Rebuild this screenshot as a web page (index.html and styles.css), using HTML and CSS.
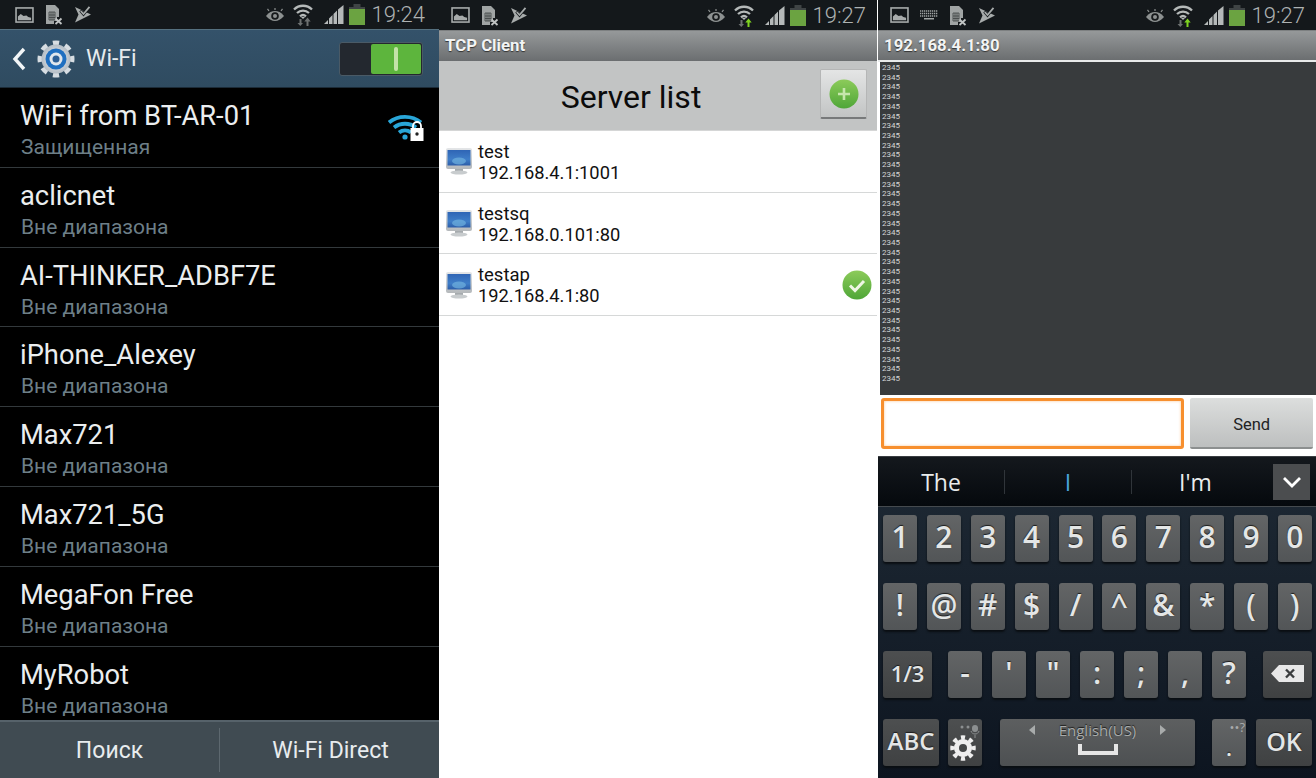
FILE: index.html
```html
<!DOCTYPE html>
<html lang="ru">
<head>
<meta charset="utf-8">
<title>Android screens</title>
<link rel="stylesheet" href="styles.css">
</head>
<body>
<svg class="defs" width="0" height="0" aria-hidden="true">
  <defs>
    <linearGradient id="screenGrad" x1="0" y1="0" x2="0" y2="1"><stop offset="0" stop-color="#2f65b5"/><stop offset=".6" stop-color="#3f7ec8"/><stop offset="1" stop-color="#2c5da8"/></linearGradient>
    <linearGradient id="standGrad" x1="0" y1="0" x2="0" y2="1"><stop offset="0" stop-color="#e4e6e8"/><stop offset="1" stop-color="#b4b8bb"/></linearGradient>
    <linearGradient id="greenGrad" x1="0" y1="0" x2="0" y2="1"><stop offset="0" stop-color="#8ccb5a"/><stop offset="1" stop-color="#4fa638"/></linearGradient>
    <radialGradient id="gearGrad"><stop offset="0" stop-color="#f4f6f8"/><stop offset="1" stop-color="#b4bdc5"/></radialGradient>
    <symbol id="i-pic" viewBox="0 0 20 17"><rect x="1" y="1" width="18" height="15" fill="none" stroke="#a7abab" stroke-width="1.7"/><path d="M3 14V10l3-2.500 3 2 3-.5 2 1.500 3 1V14z" fill="#a7abab"/></symbol>
    <symbol id="i-sim" viewBox="0 0 18 21"><path d="M1 1h9l4 4v8H12v4H9v3H1z" fill="#a0a4a4"/><path d="M4 8h6v8H4zM6 8v8M8 8v8M4 11h6M4 13.500h6" fill="none" stroke="#3d4142" stroke-width=".8"/><path d="M10.500 14.500l6 5.500m0-5.500l-6 5.500" stroke="#c2c5c5" stroke-width="1.800"/></symbol>
    <symbol id="i-flag" viewBox="0 0 17 17"><path d="M0 1l16 7.500L0 16.500l3.500-8z" fill="#a7abab"/><path d="M5.500 4.500l3 3.500 6-7.500" fill="none" stroke="#14181b" stroke-width="3.200"/><path d="M5.800 5l2.700 3L14.500 .8" fill="none" stroke="#a7abab" stroke-width="1.800"/></symbol>
    <symbol id="i-eye" viewBox="0 0 20 13"><path d="M1 8c3-4 6-5 9-5s6 1 9 5c-3 3.600-6 5-9 5s-6-1.400-9-5z" fill="#8d9191"/><circle cx="10" cy="8" r="3.800" fill="#16191b"/><circle cx="10" cy="8" r="2" fill="#8d9191"/><path d="M4 3L2.500 .8M16 3l1.500-2.200M10 2V0" stroke="#8d9191" stroke-width="1.200"/></symbol>
    <symbol id="i-wifi" viewBox="0 0 20 23"><g fill="none" stroke="#b5b9b9" stroke-width="2.300"><path d="M1 6.500C6 1.500 14 1.500 19 6.500"/><path d="M4 10c3.500-3.300 8.500-3.300 12 0"/><path d="M7 13.300c2-1.700 4-1.700 6 0"/></g><path d="M10 16l-2-2h4z" fill="#b5b9b9"/><path d="M6.500 16v4H4.500l2.800 3 2.700-3H8.500v-4z" fill="#6d7171"/><path d="M13.500 23v-4.500h-2.200l3.200-4 3.200 4h-2.200V23z" fill="#6d7171"/></symbol>
    <symbol id="i-wifi-up" viewBox="0 0 20 23"><g fill="none" stroke="#b5b9b9" stroke-width="2.300"><path d="M1 6.500C6 1.500 14 1.500 19 6.500"/><path d="M4 10c3.500-3.300 8.500-3.300 12 0"/><path d="M7 13.300c2-1.700 4-1.700 6 0"/></g><path d="M10 16l-2-2h4z" fill="#b5b9b9"/><path d="M6.500 16v4H4.500l2.800 3 2.700-3H8.500v-4z" fill="#6d7171"/><path d="M13.500 23v-4.500h-2.200l3.200-4 3.200 4h-2.200V23z" fill="#7ed321"/></symbol>
    <symbol id="i-signal" viewBox="0 0 20 19"><path d="M0 19l4-4v4zM5 19v-5.500l3.500-3.500v9zM9.500 19V9l3.500-3.500V19zM14 19V4.500L19.500 0v19z" fill="#b5b9b9"/></symbol>
    <symbol id="i-batt" viewBox="0 0 16 21"><rect x="4.500" y="0" width="7" height="3" fill="#3f4445"/><rect x="0" y="3" width="16" height="2" fill="#3f4445"/><rect x="0" y="5" width="16" height="16" fill="#6ba341"/></symbol>
    <symbol id="i-kbd" viewBox="0 0 18 10"><path d="M0 1h18M0 3.500h18M0 6h18" stroke="#a0a4a4" stroke-width="1.400" stroke-dasharray="1.300 .7"/><rect x="4" y="8" width="10" height="1.500" fill="#a0a4a4"/></symbol>
    <symbol id="i-monitor" viewBox="0 0 26 27"><rect x="0" y="0" width="26" height="21" rx="2" fill="url(#standGrad)"/><rect x="1.500" y="2" width="23" height="15.500" fill="url(#screenGrad)"/><ellipse cx="13" cy="13" rx="7" ry="3.500" fill="#6fb0de" opacity=".7"/><rect x="9" y="21" width="8" height="2" fill="#a6abae"/><ellipse cx="13" cy="24.500" rx="8.500" ry="2" fill="#c8ccce"/></symbol>
  </defs>
</svg>

<main class="screens">
  <section class="phone phone-wifi">
    <header class="status status-wifi">
      <svg class="si si-pic"><use href="#i-pic"/></svg>
      <svg class="si si-sim"><use href="#i-sim"/></svg>
      <svg class="si si-flag"><use href="#i-flag"/></svg>
      <span class="status-spacer"></span>
      <svg class="si si-eye"><use href="#i-eye"/></svg>
      <svg class="si si-wifi"><use href="#i-wifi"/></svg>
      <svg class="si si-signal"><use href="#i-signal"/></svg>
      <svg class="si si-batt"><use href="#i-batt"/></svg>
      <span class="clock">19:24</span>
    </header>
    <div class="wifi-head">
      <svg class="back" viewBox="0 0 14 24"><path d="M12 2L3 12l9 10" fill="none" stroke="#f2f5f7" stroke-width="3.400"/></svg>
      <svg class="gear" viewBox="0 0 38 38">
        <circle cx="19" cy="19" r="15.500" fill="none" stroke="#d7dde2" stroke-width="6" pathLength="80" stroke-dasharray="5 5" stroke-dashoffset="2.500"/>
        <circle cx="19" cy="19" r="14.500" fill="url(#gearGrad)"/>
        <circle cx="19" cy="19" r="10.500" fill="#1f6fc0"/>
        <circle cx="19" cy="19" r="6.500" fill="#dfe6ec"/>
        <circle cx="19" cy="19" r="3.500" fill="#2c5f96"/>
      </svg>
      <span class="wifi-title">Wi-Fi</span>
      <div class="toggle"><span class="toggle-on"><span class="toggle-grip"></span></span></div>
    </div>
    <ul class="net-list">
      <li class="net">
        <div class="net-name">WiFi from BT-AR-01</div>
        <div class="net-sub">Защищенная</div>
        <svg class="net-signal" viewBox="0 0 36 27">
          <g fill="none" stroke="#29a6d8" stroke-width="3.800"><path d="M1 8.500C10 1 24 1 33 8.500"/><path d="M6 13.500c6.500-5 15.500-5 22 0"/><path d="M11 18.500c3.500-2.700 8.500-2.700 12 0"/></g>
          <circle cx="17" cy="23" r="2.600" fill="#29a6d8"/>
          <path d="M25 15v-3a4 4 0 0 1 8 0v3" fill="none" stroke="#fff" stroke-width="1.800"/>
          <rect x="22.500" y="14" width="13" height="13" fill="#fff"/>
          <circle cx="29" cy="20" r="1.700" fill="#222"/>
        </svg>
      </li>
      <li class="net"><div class="net-name">aclicnet</div><div class="net-sub">Вне диапазона</div></li>
      <li class="net"><div class="net-name">AI-THINKER_ADBF7E</div><div class="net-sub">Вне диапазона</div></li>
      <li class="net"><div class="net-name">iPhone_Alexey</div><div class="net-sub">Вне диапазона</div></li>
      <li class="net"><div class="net-name">Max721</div><div class="net-sub">Вне диапазона</div></li>
      <li class="net"><div class="net-name">Max721_5G</div><div class="net-sub">Вне диапазона</div></li>
      <li class="net"><div class="net-name">MegaFon Free</div><div class="net-sub">Вне диапазона</div></li>
      <li class="net"><div class="net-name">MyRobot</div><div class="net-sub">Вне диапазона</div></li>
    </ul>
    <footer class="wifi-foot">
      <button class="foot-btn foot-scan">Поиск</button>
      <span class="foot-div"></span>
      <button class="foot-btn foot-direct">Wi-Fi Direct</button>
    </footer>
  </section>

  <section class="phone phone-list">
    <header class="status status-app">
      <svg class="si si-pic"><use href="#i-pic"/></svg>
      <svg class="si si-sim"><use href="#i-sim"/></svg>
      <svg class="si si-flag"><use href="#i-flag"/></svg>
      <span class="status-spacer"></span>
      <svg class="si si-eye"><use href="#i-eye"/></svg>
      <svg class="si si-wifi"><use href="#i-wifi-up"/></svg>
      <svg class="si si-signal"><use href="#i-signal"/></svg>
      <svg class="si si-batt"><use href="#i-batt"/></svg>
      <span class="clock">19:27</span>
    </header>
    <div class="app-title">TCP Client</div>
    <div class="list-head">
      <h1 class="list-title">Server list</h1>
      <button class="add-btn" aria-label="Add">
        <svg class="add-icon" viewBox="0 0 30 30"><circle cx="15" cy="15" r="14.500" fill="url(#greenGrad)"/><path d="M15 9v12M9 15h12" stroke="#c6e6ac" stroke-width="2.600"/></svg>
      </button>
    </div>
    <ul class="srv-list">
      <li class="srv">
        <svg class="srv-icon"><use href="#i-monitor"/></svg>
        <div><div class="srv-name">test</div><div class="srv-addr">192.168.4.1:1001</div></div>
      </li>
      <li class="srv">
        <svg class="srv-icon"><use href="#i-monitor"/></svg>
        <div><div class="srv-name">testsq</div><div class="srv-addr">192.168.0.101:80</div></div>
      </li>
      <li class="srv">
        <svg class="srv-icon"><use href="#i-monitor"/></svg>
        <div><div class="srv-name">testap</div><div class="srv-addr">192.168.4.1:80</div></div>
        <svg class="srv-check" viewBox="0 0 30 30"><circle cx="15" cy="15" r="14.500" fill="url(#greenGrad)"/><path d="M8 15.500l5 5 9-9.500" fill="none" stroke="#eef6e4" stroke-width="3"/></svg>
      </li>
    </ul>
  </section>

  <section class="phone phone-term">
    <header class="status status-term">
      <svg class="si si-pic"><use href="#i-pic"/></svg>
      <svg class="si si-kbd"><use href="#i-kbd"/></svg>
      <svg class="si si-sim"><use href="#i-sim"/></svg>
      <svg class="si si-flag"><use href="#i-flag"/></svg>
      <span class="status-spacer"></span>
      <svg class="si si-eye"><use href="#i-eye"/></svg>
      <svg class="si si-wifi"><use href="#i-wifi-up"/></svg>
      <svg class="si si-signal"><use href="#i-signal"/></svg>
      <svg class="si si-batt"><use href="#i-batt"/></svg>
      <span class="clock">19:27</span>
    </header>
    <div class="app-title app-title-term">192.168.4.1:80</div>
    <div class="log">
      <div>2345</div><div>2345</div><div>2345</div><div>2345</div><div>2345</div><div>2345</div><div>2345</div><div>2345</div><div>2345</div><div>2345</div><div>2345</div>
      <div>2345</div><div>2345</div><div>2345</div><div>2345</div><div>2345</div><div>2345</div><div>2345</div><div>2345</div><div>2345</div><div>2345</div><div>2345</div>
      <div>2345</div><div>2345</div><div>2345</div><div>2345</div><div>2345</div><div>2345</div><div>2345</div><div>2345</div><div>2345</div><div>2345</div><div>2345</div>
    </div>
    <div class="send-row">
      <div class="send-input"></div>
      <button class="send-btn">Send</button>
    </div>
    <div class="keyboard">
      <div class="suggest">
        <span class="sug">The</span>
        <span class="sug sug-mid">I</span>
        <span class="sug sug-last">I'm</span>
        <span class="sug-more"><svg class="sug-chev" viewBox="0 0 20 12"><path d="M2 2l8 8 8-8" fill="none" stroke="#fff" stroke-width="2.800"/></svg></span>
      </div>
      <div class="keys">
        <div class="krow krow-num">
          <span class="key">1</span><span class="key">2</span><span class="key">3</span><span class="key">4</span><span class="key">5</span><span class="key">6</span><span class="key">7</span><span class="key">8</span><span class="key">9</span><span class="key">0</span>
        </div>
        <div class="krow krow-sym">
          <span class="key">!</span><span class="key">@</span><span class="key">#</span><span class="key">$</span><span class="key">/</span><span class="key">^</span><span class="key">&amp;</span><span class="key">*</span><span class="key">(</span><span class="key">)</span>
        </div>
        <div class="krow krow-punct">
          <span class="key key-fn key-page">1/3</span>
          <span class="key">-</span><span class="key">'</span><span class="key">"</span><span class="key">:</span><span class="key">;</span><span class="key">,</span><span class="key">?</span>
          <span class="key key-fn key-del"><svg class="del-icon" viewBox="0 0 33 17"><path d="M0 8.500L8 0h25v17H8z" fill="#e8e8e8"/><path d="M15 4.500l8 8m0-8l-8 8" stroke="#3a3d3e" stroke-width="2.400"/></svg></span>
        </div>
        <div class="krow krow-bottom">
          <span class="key key-fn key-abc">ABC</span>
          <span class="key key-fn key-set">
            <svg class="set-mic" viewBox="0 0 20 16"><circle cx="2" cy="5" r="1.500" fill="#8c8f90"/><circle cx="8" cy="5" r="1.500" fill="#8c8f90"/><rect x="12" y="3" width="6" height="7" rx="3" fill="#8c8f90"/><path d="M11 9c1 4 7 4 8 0M15 13v3" fill="none" stroke="#8c8f90" stroke-width="1"/></svg>
            <svg class="set-icon" viewBox="0 0 28 28"><circle cx="14" cy="14" r="10.500" fill="none" stroke="#eee" stroke-width="4.500" pathLength="80" stroke-dasharray="5 5" stroke-dashoffset="2.500"/><circle cx="14" cy="14" r="9" fill="#eee"/><circle cx="14" cy="14" r="4" fill="#454748"/></svg>
          </span>
          <span class="key key-space">
            <span class="space-lang"><i class="tri tri-l"></i><span class="lang">English(US)</span><i class="tri tri-r"></i></span>
            <svg class="space-icon" viewBox="0 0 40 12"><path d="M2 0v9h36V0" fill="none" stroke="#e6e6e6" stroke-width="4"/></svg>
          </span>
          <span class="key key-dot">.<span class="hint hint-dot">••?</span></span>
          <span class="key key-fn key-ok">OK</span>
        </div>
      </div>
    </div>
  </section>
</main>
</body>
</html>
```
FILE: styles.css
```css
* { box-sizing: border-box; }
html, body { margin: 0; padding: 0; }
body { width: 1316px; height: 778px; overflow: hidden; background: #fff; font-family: Roboto, "Liberation Sans", sans-serif; }
.defs { position: absolute; }
ul { list-style: none; margin: 0; padding: 0; }
button { font: inherit; border: 0; padding: 0; background: none; color: inherit; }

.screens { display: flex; height: 778px; }
.phone { display: flex; flex-direction: column; height: 778px; overflow: hidden; }
.phone-wifi { width: 439px; background: #000; }
.phone-list { width: 439px; background: #fff; padding-right: 1px; }
.phone-term { width: 438px; background: #fff; }

/* status bar */
.status { display: flex; align-items: center; flex: none; height: 30px; background: #14181b; }
.status-wifi { height: 29px; padding: 0 14px 0 15px; }
.status-app { padding: 0 11px 0 12px; }
.status-term { padding: 0 11px 0 12px; }
.status-spacer { flex: 1; }
.si { display: block; flex: none; }
.si-pic { width: 19px; height: 16px; margin-right: 11px; }
.si-kbd { width: 18px; height: 10px; margin-right: 11px; }
.si-sim { width: 18px; height: 21px; margin-right: 12px; }
.si-flag { width: 17px; height: 17px; }
.si-eye { width: 20px; height: 13px; margin-right: 8px; }
.si-wifi { width: 20px; height: 23px; margin-right: 11px; }
.si-signal { width: 20px; height: 19px; margin-right: 5px; }
.si-batt { width: 16px; height: 21px; margin-right: 7px; }
.clock { font-size: 22px; font-weight: 300; color: #aeb2b2; line-height: 29px; }

/* wifi */
.wifi-head { display: flex; align-items: center; flex: none; height: 59px; padding: 0 16px 0 12px; background: linear-gradient(#34526a, #2f4b60); border-top: 1px solid #55707f; border-bottom: 1px solid #1c2b37; }
.back { width: 14px; height: 24px; flex: none; margin-right: 11px; }
.gear { width: 38px; height: 38px; flex: none; margin-right: 11px; }
.wifi-title { flex: 1; font-size: 23px; color: #e6ebee; }
.toggle { width: 84px; height: 34px; padding: 1px; display: flex; justify-content: flex-end; background: #23282f; border: 1px solid #4a5a66; border-radius: 3px; }
.toggle-on { width: 50px; display: flex; align-items: center; justify-content: center; background: #5db53d; border-radius: 2px; }
.toggle-grip { width: 4px; height: 24px; background: #c3e3a8; border-radius: 2px; }
.net-list { flex: 1; overflow: hidden; }
.net { position: relative; height: 79.8px; padding: 13px 0 0 20px; border-bottom: 1px solid #33393c; }
.net-name { font-size: 27.3px; line-height: 31px; color: #ebeeef; }
.net-sub { font-size: 21px; line-height: 30px; color: #6d7f88; padding-left: 1px; }
.net-signal { position: absolute; right: 15px; top: 26px; width: 36px; height: 27px; }
.wifi-foot { display: flex; align-items: center; flex: none; height: 58px; background: #404b52; border-top: 2px solid #56626a; }
.foot-btn { font-size: 23px; color: #e8ecee; text-align: center; }
.foot-scan { width: 219px; }
.foot-div { width: 1px; height: 44px; background: #5d686f; }
.foot-direct { flex: 1; padding-left: 2px; }

/* app */
.app-title { flex: none; height: 31px; padding-left: 6px; font-size: 16.8px; font-weight: 700; line-height: 29px; color: #f2f4f4; text-shadow: 0 1px 1px #333; background: linear-gradient(#96999a, #6b6e70); border-top: 1px solid #7d8081; }
.app-title-term { height: 32px; border-bottom: 2px solid #e8eaea; }
.list-head { position: relative; display: flex; align-items: center; justify-content: center; flex: none; height: 70px; padding: 2px 54px 0 0; background: #c2c4c4; border-bottom: 1px solid #d5d6d6; }
.list-title { margin: 0; font-size: 32px; font-weight: 400; color: #0b0b0b; }
.add-btn { position: absolute; right: 10px; top: 8px; width: 47px; height: 50px; display: flex; align-items: center; justify-content: center; background: linear-gradient(#e4e5e5, #c2c4c4); border: 1px solid #b5b6b6; border-bottom: 2px solid #77797a; border-radius: 2px; }
.add-icon { width: 30px; height: 30px; }
.srv { position: relative; display: flex; align-items: center; height: 61.7px; padding: 1px 0 0 7px; border-bottom: 1px solid #d6d8d8; }
.srv-icon { width: 26px; height: 27px; flex: none; margin-right: 5px; }
.srv-name { font-size: 18.5px; line-height: 21px; padding: 1px 0 0 1px; color: #111; }
.srv-addr { font-size: 18.3px; line-height: 20px; color: #111; padding-left: 1px; }
.srv-check { position: absolute; right: 5px; top: 16px; width: 30px; height: 30px; }

/* terminal */
.log { flex: none; height: 333px; margin-left: 2px; padding: 1px 0 0 2px; background: #383b3d; font-size: 8px; line-height: 9.72px; color: #d4d6d6; }
.send-row { display: flex; flex: none; height: 61px; padding: 3px 3px 0; gap: 6px; }
.send-input { width: 304px; height: 51px; background: #fff; border: 3px solid #f78f2e; border-radius: 3px; box-shadow: inset 0 0 3px #f9c795; }
.send-btn { width: 123px; height: 51px; padding-top: 3px; font-size: 16.5px; color: #222; background: linear-gradient(#dcdedd, #bdbfbf); border-bottom: 2px solid #8c8f8f; border-radius: 2px; }
.keyboard { flex: 1; display: flex; flex-direction: column; background: linear-gradient(#1f2a35, #0d1520); font-family: "Open Sans", "Liberation Sans", sans-serif; }
.suggest { display: flex; align-items: center; flex: none; height: 51px; background: linear-gradient(#14181d, #05090d); border-top: 1px solid #3a3e42; border-bottom: 1px solid #454a4e; color: #e9ecec; font-size: 23px; }
.sug { width: 127px; text-align: center; border-right: 1px solid #30353a; line-height: 24px; }
.sug-mid { color: #4aa3dc; }
.sug-last { border-right: 0; }
.sug-more { width: 37px; height: 36px; margin-left: 14px; display: flex; align-items: center; justify-content: center; background: #4b4d4f; }
.sug-chev { width: 20px; height: 12px; }
.keys { display: flex; flex-direction: column; gap: 21px; padding: 8px 4px 0 5px; }
.krow { display: flex; justify-content: space-between; height: 47px; }
.key { position: relative; display: flex; align-items: center; justify-content: center; width: 34px; height: 47px; padding-bottom: 3px; font-size: 30px; font-weight: 600; line-height: 1; color: #e4e6e6; text-shadow: 0 -1px 1px #1c1c1c; background: linear-gradient(#636566, #525557); border-radius: 3px; box-shadow: 0 2px 2px #0a0e12; }
.key-fn { background: linear-gradient(#4d4f50, #3f4142); }
.key-page { width: 49px; font-size: 22px; margin-right: 6px; }
.key-del { width: 49px; margin-left: 7px; }
.del-icon { width: 33px; height: 17px; }
.krow-bottom { justify-content: flex-start; }
.key-abc { width: 56px; font-size: 24px; margin-right: 9px; }
.key-set { margin-right: 18px; align-items: flex-end; padding: 0 0 4px; }
.set-mic { position: absolute; top: 3px; right: 2px; width: 20px; height: 16px; }
.set-icon { width: 28px; height: 28px; margin-right: 4px; }
.key-space { width: 195px; flex-direction: column; justify-content: flex-start; padding: 1px 0 0; background: linear-gradient(#5d5f60, #4d5052); margin-right: 17px; }
.space-lang { display: flex; align-items: center; gap: 24px; font-size: 15px; font-weight: 400; color: #a8abab; line-height: 20px; }
.lang { display: block; }
.tri { width: 0; height: 0; border-top: 5px solid transparent; border-bottom: 5px solid transparent; }
.tri-l { border-right: 6px solid #a8abab; }
.tri-r { border-left: 6px solid #a8abab; }
.space-icon { width: 40px; height: 12px; margin-top: 4px; }
.key-dot { margin-right: 10px; padding: 8px 0 0; font-size: 22px; }
.key-ok { width: 56px; font-size: 25px; }
.hint { position: absolute; top: 1px; right: 1px; font-size: 13px; font-weight: 400; line-height: 14px; color: #a8abab; text-shadow: none; }
```
